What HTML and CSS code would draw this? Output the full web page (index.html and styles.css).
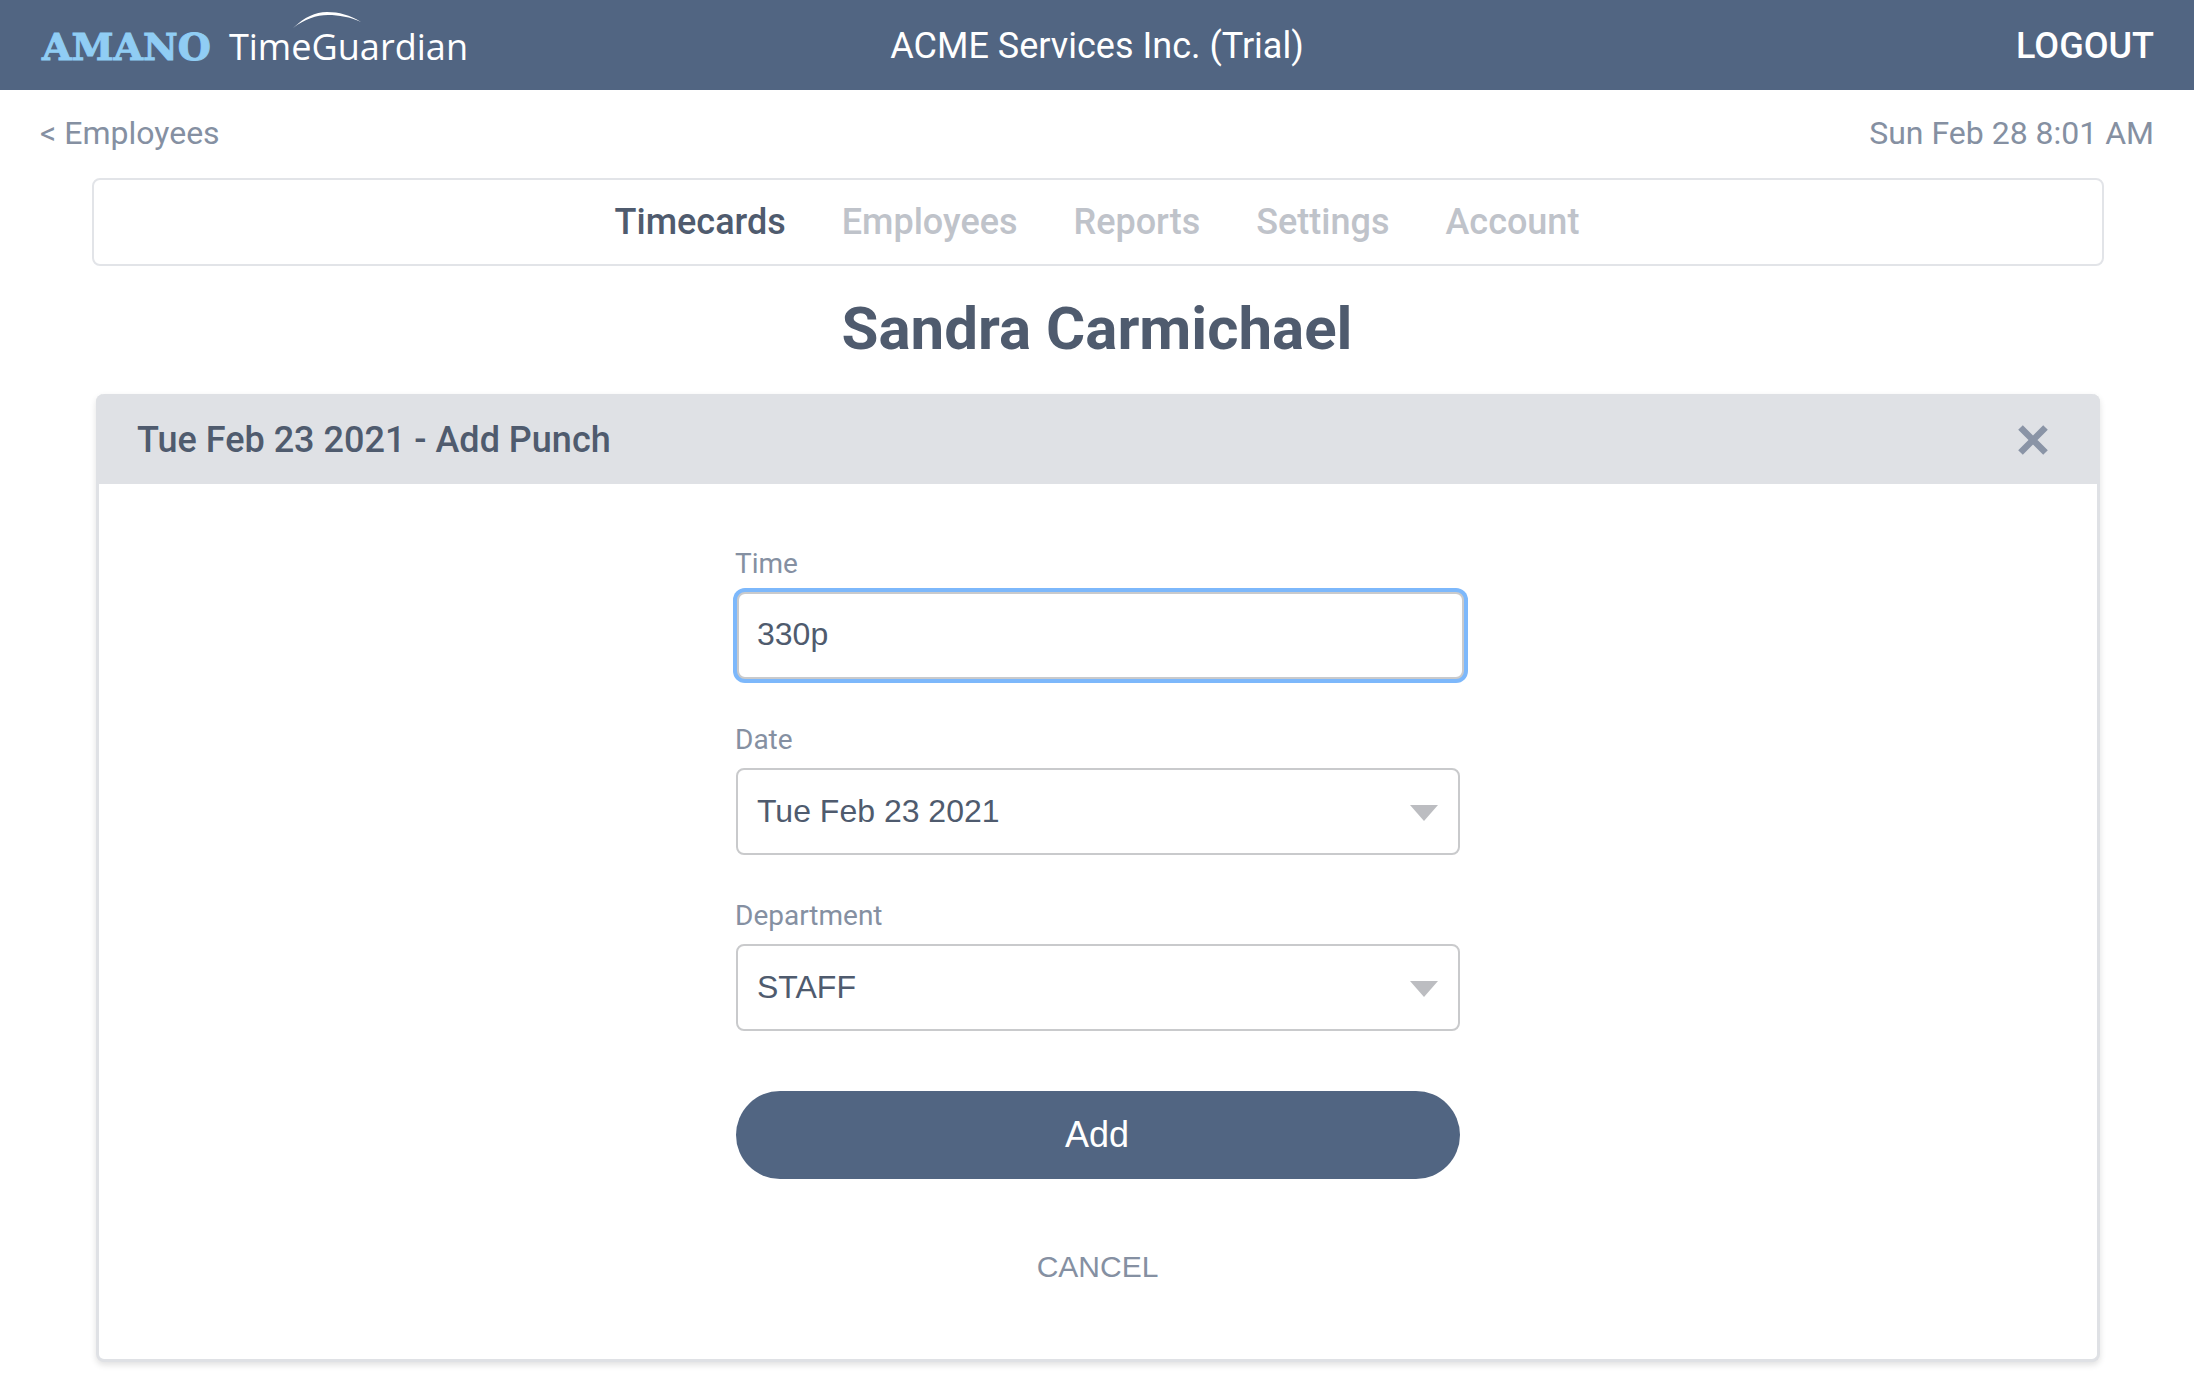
FILE: index.html
```html
<!DOCTYPE html>
<html lang="en">
<head>
<meta charset="utf-8">
<title>TimeGuardian</title>
<link rel="stylesheet" href="styles.css">
</head>
<body>
<header class="topbar">
  <div class="logo">
    <span class="logo-amano">AMANO</span>
    <span class="logo-tg">TimeGuardian</span>
    <svg class="logo-arc" width="70" height="20" viewBox="0 0 70 20"><path d="M0 17C12 6 22 1 34 1C46 1 57 4 68 11C57 6 46 4 35 4C23 4 12 8 0 17Z" fill="#fff"/></svg>
  </div>
  <div class="company">ACME Services Inc. (Trial)</div>
  <a class="logout">LOGOUT</a>
</header>
<div class="subbar">
  <a class="back">&lt; Employees</a>
  <span class="clock">Sun Feb 28 8:01 AM</span>
</div>
<nav class="nav">
  <a class="nav-item active">Timecards</a>
  <a class="nav-item">Employees</a>
  <a class="nav-item">Reports</a>
  <a class="nav-item">Settings</a>
  <a class="nav-item">Account</a>
</nav>
<h1 class="name">Sandra Carmichael</h1>
<section class="card">
  <div class="card-head">
    <h2 class="card-title">Tue Feb 23 2021 - Add Punch</h2>
    <svg class="close" width="30" height="30" viewBox="0 0 30 30"><path d="M2.5 2.5L27.5 27.5M27.5 2.5L2.5 27.5" stroke="#8a94a6" stroke-width="6.5" fill="none"/></svg>
  </div>
  <form class="form">
    <label class="label">Time</label>
    <input class="field field-focus" type="text" value="330p">
    <label class="label label-next">Date</label>
    <div class="select-wrap">
      <select class="field"><option>Tue Feb 23 2021</option></select>
      <span class="caret"></span>
    </div>
    <label class="label label-next">Department</label>
    <div class="select-wrap">
      <select class="field"><option>STAFF</option></select>
      <span class="caret"></span>
    </div>
    <button class="add" type="button">Add</button>
    <a class="cancel">CANCEL</a>
  </form>
</section>
</body>
</html>
```
FILE: styles.css
```css
* { box-sizing: border-box; }
html, body { margin: 0; padding: 0; background: #fff; }
body { height: 1397px; overflow: hidden; font-family: Roboto, "Liberation Sans", sans-serif; color: #4f5b6e; }
.topbar { height: 90px; background: #516582; display: grid; grid-template-columns: 1fr auto 1fr; align-items: center; padding: 2px 40px 0; color: #fff; }
.logo { position: relative; display: flex; align-items: center; height: 88px; }
.logo-amano { font-family: "DejaVu Serif", serif; font-weight: 700; font-size: 38px; color: #90cdf4; margin-left: 2px; -webkit-text-stroke: 1px #90cdf4; }
.logo-tg { font-family: "Open Sans", sans-serif; font-size: 36.1px; margin-left: 18px; color: #fff; }
.logo-arc { position: absolute; left: 253px; top: 9px; }
.company { font-size: 36px; text-align: center; }
.logout { font-size: 36px; font-weight: 500; text-align: right; }
.subbar { height: 88px; display: flex; justify-content: space-between; align-items: center; padding: 0 40px 2px; font-size: 32px; color: #8590a2; }
.nav { margin: 0 90px 0 92px; height: 88px; padding-right: 2px; border: 2px solid #e2e4e8; border-radius: 8px; display: flex; justify-content: center; align-items: center; gap: 56px; font-size: 36px; font-weight: 500; color: #bfc3ca; }
.nav-item.active { color: #4f5b6e; }
.name { margin: 0; height: 128px; padding-bottom: 4px; display: flex; align-items: center; justify-content: center; font-size: 60px; font-weight: 700; color: #4f5b6e; }
.card { margin: 0 94px 0 96px; height: 968px; border-radius: 8px; border: 3px solid #dfe1e5; border-top: 0; box-shadow: 0 3px 6px rgba(0,0,0,.12); background: #fff; }
.card-head { margin: 0 -3px; height: 90px; background: #dfe1e5; border-radius: 8px 8px 0 0; display: flex; justify-content: space-between; align-items: center; padding: 2px 52px 0 41px; }
.card-title { margin: 0; font-size: 36px; font-weight: 500; color: #4f5b6e; }
.form { width: 724px; margin: 0 auto; padding-top: 62px; display: flex; flex-direction: column; }
.label { font-size: 28px; color: #8590a2; height: 46px; line-height: 36px; margin-left: -1px; }
.label-next { margin-top: 43px; }
.field { width: 100%; height: 87px; border: 2px solid #c9cacc; border-radius: 8px; background: #fff; padding: 0 19px 2px; font-family: "Liberation Sans", Arial, sans-serif; font-size: 32px; color: #4f5b6e; appearance: none; outline: none; display: block; }
.field-focus { width: 727px; flex: none; margin-left: 1px; padding-left: 18px; box-shadow: 0 0 0 4px #7db8fb; }
.select-wrap { position: relative; }
.caret { position: absolute; right: 22px; top: 37px; width: 0; height: 0; border-left: 14px solid transparent; border-right: 14px solid transparent; border-top: 16px solid #bcbdc1; }
.add { margin-top: 60px; height: 88px; width: 100%; padding: 0 2px 0 0; border: 0; border-radius: 44px; background: #516582; color: #fff; font-family: "Liberation Sans", Arial, sans-serif; font-size: 36px; }
.cancel { margin-top: 71px; padding-right: 1px; text-align: center; font-family: "Liberation Sans", Arial, sans-serif; font-size: 30px; color: #8590a2; }
```
